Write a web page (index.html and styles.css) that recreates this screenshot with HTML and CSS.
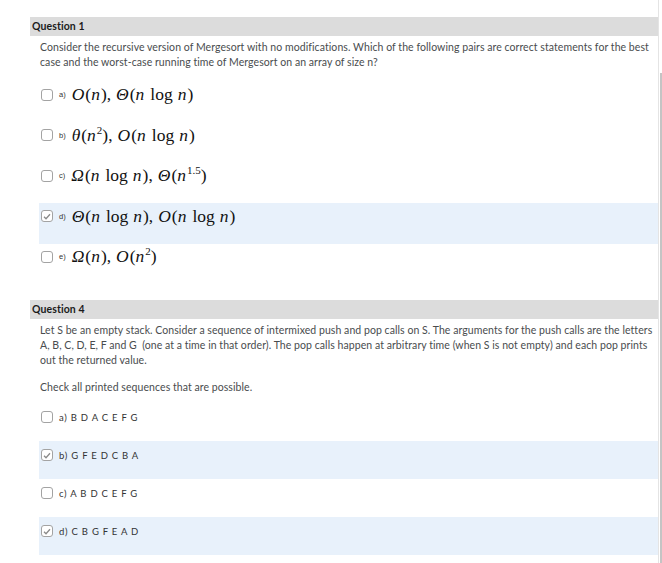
FILE: index.html
```html
<!DOCTYPE html>
<html lang="en">
<head>
    <meta charset="UTF-8">
    <title>Quiz</title>
    <link rel="stylesheet" href="styles.css">
</head>
<body>

<div class="page">
    <div class="quiz">

        <!-- question 1 -->
        <div class="q-head">Question 1</div>
        <div class="q-text">
            <p>Consider the recursive version of Mergesort with no modifications. Which of the following pairs are correct statements for the best case and the worst-case running time of Mergesort on an array of size n?</p>
        </div>

        <div class="opts math-opts">
            <div class="opt">
                <div class="opt-line">
                    <span class="box"></span>
                    <span class="lbl">a)</span>
                    <span class="math"><i>O</i>(<i>n</i>),<span class="sp"></span><i>Θ</i>(<i>n</i><span class="sp"></span>log<span class="sp"></span><i>n</i>)</span>
                </div>
            </div>
            <div class="opt">
                <div class="opt-line">
                    <span class="box"></span>
                    <span class="lbl">b)</span>
                    <span class="math"><i>θ</i>(<i>n</i><sup>2</sup>),<span class="sp"></span><i>O</i>(<i>n</i><span class="sp"></span>log<span class="sp"></span><i>n</i>)</span>
                </div>
            </div>
            <div class="opt">
                <div class="opt-line">
                    <span class="box"></span>
                    <span class="lbl">c)</span>
                    <span class="math"><i>Ω</i>(<i>n</i><span class="sp"></span>log<span class="sp"></span><i>n</i>),<span class="sp"></span><i>Θ</i>(<i>n</i><sup>1.5</sup>)</span>
                </div>
            </div>
            <div class="opt selected">
                <div class="opt-line">
                    <span class="box checked"><svg width="8" height="7" viewBox="0 0 8 7"><path d="M1 3.8 L3 5.7 L7 1.2" fill="none" stroke="#8a8a8a" stroke-width="1.3"/></svg></span>
                    <span class="lbl">d)</span>
                    <span class="math"><i>Θ</i>(<i>n</i><span class="sp"></span>log<span class="sp"></span><i>n</i>),<span class="sp"></span><i>O</i>(<i>n</i><span class="sp"></span>log<span class="sp"></span><i>n</i>)</span>
                </div>
            </div>
            <div class="opt">
                <div class="opt-line">
                    <span class="box"></span>
                    <span class="lbl">e)</span>
                    <span class="math"><i>Ω</i>(<i>n</i>),<span class="sp"></span><i>O</i>(<i>n</i><sup>2</sup>)</span>
                </div>
            </div>
        </div>

        <!-- question 4 -->
        <div class="q-head q4">Question 4</div>
        <div class="q-text">
            <p>Let S be an empty stack. Consider a sequence of intermixed push and pop calls on S. The arguments for the push calls are the letters A, B, C, D, E, F and G&nbsp; (one at a time in that order). The pop calls happen at arbitrary time (when S is not empty) and each pop prints out the returned value.</p>
            <p class="check-all">Check all printed sequences that are possible.</p>
        </div>

        <div class="opts text-opts">
            <div class="opt">
                <div class="opt-line">
                    <span class="box"></span>
                    <span class="seq">a) B D A C E F G</span>
                </div>
            </div>
            <div class="opt selected">
                <div class="opt-line">
                    <span class="box checked"><svg width="8" height="7" viewBox="0 0 8 7"><path d="M1 3.8 L3 5.7 L7 1.2" fill="none" stroke="#8a8a8a" stroke-width="1.3"/></svg></span>
                    <span class="seq">b) G F E D C B A</span>
                </div>
            </div>
            <div class="opt">
                <div class="opt-line">
                    <span class="box"></span>
                    <span class="seq">c) A B D C E F G</span>
                </div>
            </div>
            <div class="opt selected">
                <div class="opt-line">
                    <span class="box checked"><svg width="8" height="7" viewBox="0 0 8 7"><path d="M1 3.8 L3 5.7 L7 1.2" fill="none" stroke="#8a8a8a" stroke-width="1.3"/></svg></span>
                    <span class="seq">d) C B G F E A D</span>
                </div>
            </div>
        </div>

    </div>

    <div class="scrollbar"><div class="thumb"></div></div>
</div>

</body>
</html>
```

FILE: styles.css
```css
body {
    margin: 0;
    background: #fff;
    color: #494c4e;
    font-family: Lato, "Open Sans", sans-serif;
}

.page {
    display: flex;
    height: 563px;
    overflow: hidden;
}

.quiz {
    width: 628px;
    margin-left: 30px;
    padding-top: 17px;
}

.q-head {
    height: 19px;
    line-height: 19px;
    background: #dcdcdc;
    color: #1b1b1b;
    font-size: 10.5px;
    font-weight: bold;
    letter-spacing: 0.1px;
    padding-left: 2px;
}

.q-head.q4 {
    margin-top: 15.5px;
}

.q-text {
    padding: 4px 0 0 10px;
    font-size: 10.5px;
    letter-spacing: 0.08px;
    word-spacing: -0.1px;
    line-height: 15px;
}

.q-text p {
    margin: 0;
}

.q-text .check-all {
    margin-top: 12px;
}

.opts {
    margin-top: 11.5px;
    margin-left: 9px;
}

.text-opts {
    margin-top: 8.5px;
}

.opt {
    height: 40.5px;
    padding-left: 2px;
}

.text-opts .opt {
    height: 38px;
}

.opt.selected {
    background: #e8f1fb;
}

.opt-line {
    display: flex;
    align-items: center;
    height: 26px;
}

.text-opts .opt-line {
    padding-top: 1px;
}

.box {
    width: 10px;
    height: 10px;
    border: 1px solid #a3a3a3;
    border-radius: 3px;
    background: #fff;
    display: flex;
    align-items: center;
    justify-content: center;
    flex-shrink: 0;
}

.lbl {
    margin-left: 6px;
    font-family: "Liberation Sans", Arial, sans-serif;
    font-size: 7.5px;
    color: #333;
}

.math {
    margin-left: 6px;
    font-family: "Liberation Serif", "DejaVu Serif", serif;
    font-size: 17.5px;
    color: #111;
    white-space: nowrap;
}

.math i {
    font-style: italic;
    padding-right: 1px;
}

.math sup {
    font-size: 11px;
    vertical-align: 7px;
    line-height: 0;
}

.sp {
    display: inline-block;
    width: 5px;
}

.seq {
    margin-left: 6px;
    font-size: 9.5px;
    letter-spacing: 0.75px;
    color: #333;
}

.scrollbar {
    width: 4px;
    border-left: 1px solid #e4e4e4;
    box-sizing: border-box;
}

.thumb {
    margin-top: 73px;
    margin-left: 1px;
    height: 490px;
    background: #c4c4c4;
}
```
